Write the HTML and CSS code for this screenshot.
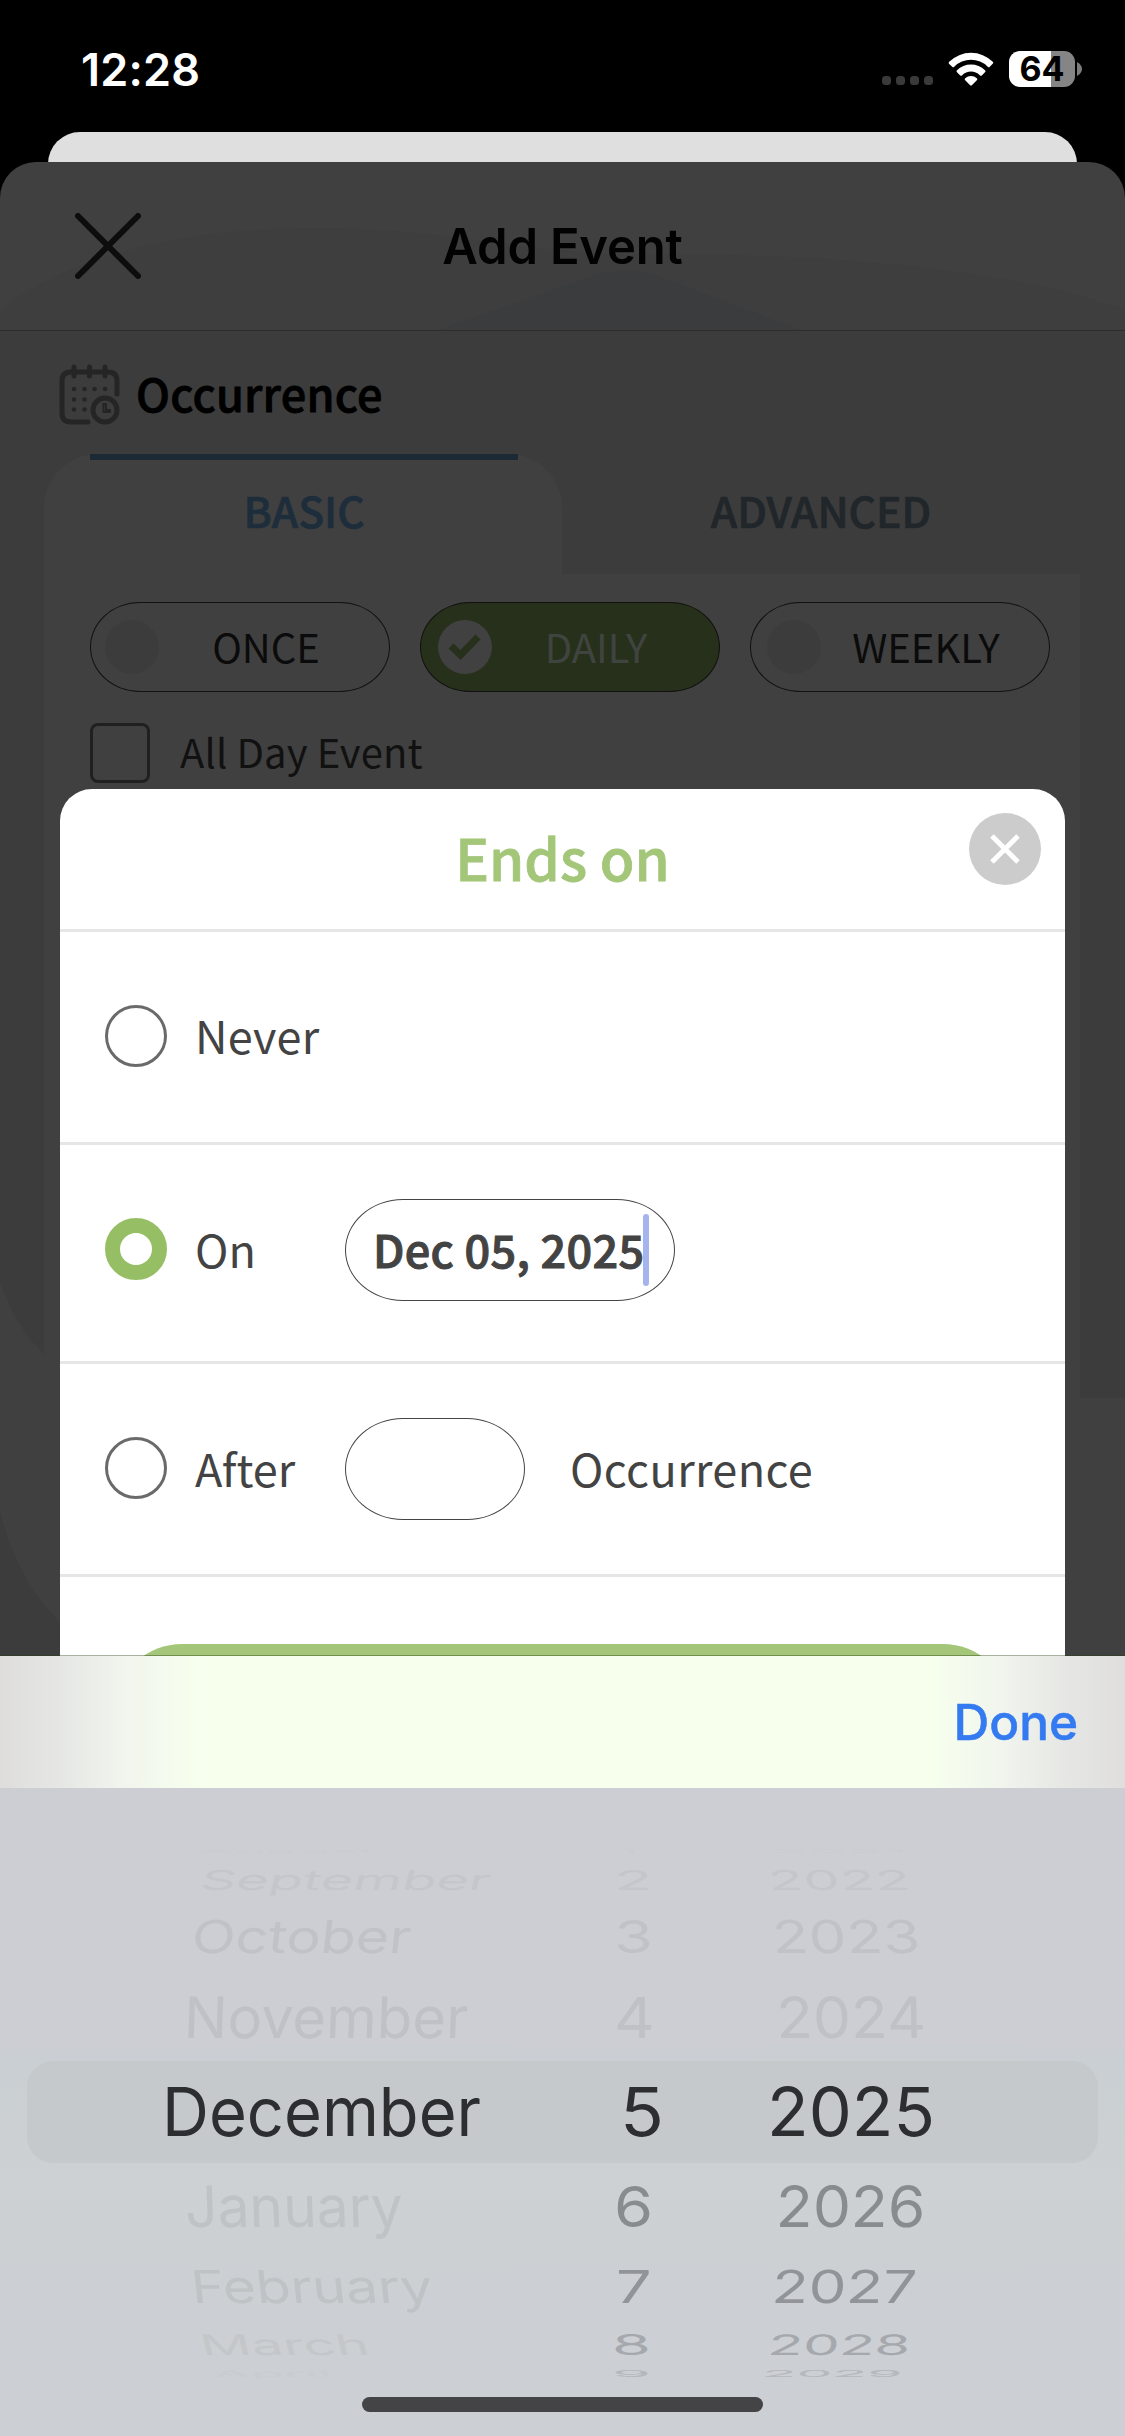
FILE: index.html
```
<!DOCTYPE html>
<html lang="en">
<head>
<meta charset="utf-8">
<title>Add Event</title>
<link rel="stylesheet" href="styles.css">
</head>
<body>
<div class="phone">
  <div class="status">
    <span class="time">12:28</span>
    <div class="indicators">
      <div class="dots"><i></i><i></i><i></i><i></i></div>
      <svg class="wifi" width="46" height="34" viewBox="0 0 46 34">
        <path d="M1.2 9.8a31 31 0 0 1 43.6 0q1 1-.1 2L41.800 14.700q-1 1-2 0a24 24 0 0 0-33.600 0q-1 1-2 0L1.200 11.900q-1-1 0-2.100zM9 18.200a20 20 0 0 1 28 0q1 1 0 2l-3 3q-1 1-2.200 0a12.600 12.600 0 0 0-17.600 0q-1.200 1-2.200 0l-3-3q-1-1 0-2zM17.200 26.300a8.600 8.600 0 0 1 11.600 0q1 1 0 2l-4.700 4.700q-1.100 1-2.200 0l-4.700-4.700q-1-1 0-2z" fill="#fff"/>
      </svg>
      <div class="battery"><span>64</span></div>
      <svg class="nub" width="5" height="14" viewBox="0 0 5 14"><path d="M0 0Q5 3 5 7T0 14z" fill="#7c7c7c"/></svg>
    </div>
  </div>
  <div class="back-sheet"></div>
  <main class="sheet">
    <svg class="scenery" width="1125" height="1500" viewBox="0 0 1125 1500">
      <path d="M0 148C80 88 190 66 320 66S520 92 640 92S980 96 1125 148V1500H0z" fill="#3e3e3e"/>
      <path d="M0 169H1125V1500H0z" fill="#3c3c3c"/>
      <path d="M438 168L590 115Q625 102 660 115L800 168z" fill="#3a3c3e"/>
      <path d="M0 1120Q20 1178 60 1205V1460Q18 1420 0 1350z" fill="#404040"/>
      <path d="M1060 1236H1125V1500H1060z" fill="#404040"/>
    </svg>
    <header class="bar">
      <svg class="close" width="66" height="66" viewBox="0 0 66 66"><path d="M3 3L63 63M63 3L3 63" stroke="#0d0d0d" stroke-width="6" stroke-linecap="round"/></svg>
      <h1>Add Event</h1>
    </header>
    <div class="section-head">
      <svg width="62" height="62" viewBox="0 0 62 62" fill="none" stroke="#252525" stroke-width="5" stroke-linecap="round">
        <path d="M29 58H12Q3 58 3 49V17Q3 8 12 8H49Q58 8 58 17V30M15 3V12M30.500 3V12M46 3V12"/>
        <circle cx="46" cy="46" r="12"/>
        <path d="M44.500 40H47V46H51V48H44.500z" stroke-width="2"/>
        <path d="M15 25h.1M25.500 25h.1M35.500 25h.1M46 25h.1M15 35.500h.1M25.500 35.500h.1M15 45.500h.1M25.500 45.500h.1" stroke-width="4.600"/>
      </svg>
      <h2>Occurrence</h2>
    </div>
    <div class="tabs">
      <div class="tab active">BASIC</div>
      <div class="tab">ADVANCED</div>
    </div>
    <div class="panel">
      <div class="pills">
        <div class="pill"><i></i><span>ONCE</span></div>
        <div class="pill on"><i><svg width="34" height="28" viewBox="0 0 34 28"><path d="M3 13L12.500 22L30 4" fill="none" stroke="#27301a" stroke-width="7"/></svg></i><span>DAILY</span></div>
        <div class="pill"><i></i><span>WEEKLY</span></div>
      </div>
      <div class="check"><i></i><span>All Day Event</span></div>
    </div>
  </main>

  <section class="modal">
    <div class="modal-head">
      <h3>Ends on</h3>
      <div class="dismiss"><svg width="30" height="30" viewBox="0 0 30 30"><path d="M2 2L28 28M28 2L2 28" stroke="#fff" stroke-width="5"/></svg></div>
    </div>
    <div class="option never"><i class="radio"></i><span class="label">Never</span></div>
    <div class="option on-date"><i class="radio checked"></i><span class="label">On</span><div class="field date"><b>Dec 05, 2025</b><i class="caret"></i></div></div>
    <div class="option after"><i class="radio"></i><span class="label">After</span><div class="field count"></div><span class="unit">Occurrence</span></div>
    <div class="save"></div>
  </section>

  <div class="keyboard">
    <div class="toolbar"><span>Done</span></div>
    <div class="picker">
      <div class="wheels">
        <ul class="wheel month"><li><span>August</span></li><li><span>September</span></li><li><span>October</span></li><li><span>November</span></li><li><span>December</span></li><li><span>January</span></li><li><span>February</span></li><li><span>March</span></li><li><span>April</span></li></ul>
        <ul class="wheel day"><li><span>1</span></li><li><span>2</span></li><li><span>3</span></li><li><span>4</span></li><li><span>5</span></li><li><span>6</span></li><li><span>7</span></li><li><span>8</span></li><li><span>9</span></li></ul>
        <ul class="wheel year"><li><span>2021</span></li><li><span>2022</span></li><li><span>2023</span></li><li><span>2024</span></li><li><span>2025</span></li><li><span>2026</span></li><li><span>2027</span></li><li><span>2028</span></li><li><span>2029</span></li></ul>
      </div>
      <div class="home"></div>
    </div>
  </div>
</div>
</body>
</html>
```
FILE: styles.css
```
* { box-sizing: border-box; margin: 0; padding: 0; }
body { background: #000; font-family: "Noto Sans CJK JP", sans-serif; }
i { font-style: normal; display: block; flex: none; }
svg { display: block; flex: none; }
.phone { position: relative; width: 1125px; height: 2436px; overflow: hidden; background: #000; }

/* status bar */
.status { height: 132px; display: flex; justify-content: space-between; padding: 6px 43px 0 81px; align-items: center; font-family: Inter, sans-serif; color: #fff; }
.time { font-size: 45px; font-weight: 600; line-height: 54px; letter-spacing: .2px; margin-top: 1px; }
.indicators { display: flex; align-items: center; }
.dots { display: flex; gap: 5px; margin: 23px 15px 0 0; }
.dots i { width: 9px; height: 9px; border-radius: 3.500px; background: #3a3a3a; }
.wifi { margin-right: 15px; }
.battery { width: 66px; height: 36px; border-radius: 11px; background: linear-gradient(90deg, #fff 42px, #858585 42px); color: #000; font-size: 34px; font-weight: 700; line-height: 36px; text-align: center; margin-right: 2px; }

/* stacked sheets */
.back-sheet { height: 60px; margin: 0 48px -30px; border-radius: 32px 32px 0 0; background: #dfdfdf; }
.sheet { position: relative; height: 2274px; border-radius: 36px 36px 0 0; background: #404040; overflow: hidden; }
.scenery { position: absolute; left: 0; top: 0; }
.bar, .section-head, .tabs, .panel { position: relative; }
.bar { height: 169px; display: grid; grid-template-columns: 66px 1fr 66px; align-items: center; padding: 0 75px; border-bottom: 1.500px solid #2d2d2d; }
.bar h1 { font: 600 49px/60px Inter, sans-serif; letter-spacing: -.2px; text-align: center; color: #020202; margin-top: 2px; }
.section-head { height: 123px; display: flex; align-items: center; gap: 15px; padding: 5px 60px 0 59px; }
.section-head h2 { font-size: 45px; font-weight: 500; line-height: 60px; letter-spacing: .2px; color: #000; margin-bottom: 4px; -webkit-text-stroke: .8px #000; }
.tabs { display: grid; grid-template-columns: 518px 518px; height: 120px; margin-left: 44px; }
.tab { position: relative; text-align: center; font-size: 42.500px; font-weight: 500; line-height: 111px; color: #20262a; -webkit-text-stroke: .7px currentColor; }
.tab.active { color: #1e2d3b; background: #404040; border-radius: 54px 54px 0 0; padding-left: 2px; }
.tab.active::before { content: ""; position: absolute; left: 46px; right: 44px; top: 0; height: 6px; background: #1b2a35; }
.panel { width: 1036px; height: 824px; margin-left: 44px; padding: 28px 0 0 46px; background: #404040; }
.pills { display: flex; gap: 30px; }
.pill { width: 300px; height: 90px; display: flex; align-items: center; padding: 0 18px 0 16px; border: 1px solid #111; border-radius: 50px / 45px; font-size: 40px; color: #0b0b0b; }
.pill i { width: 54px; height: 54px; border-radius: 50%; background: #3c3c3c; display: flex; align-items: center; justify-content: center; }
.pill:first-child i { margin: 0 2px 0 -2px; }
.pill span { flex: 1; text-align: center; line-height: 60px; margin-bottom: 3px; }
.pill.on { background: #27301a; color: #404440; }
.pill.on i { background: #414141; margin: 0 -1px 0 1px; }
.check { display: flex; align-items: center; gap: 30px; margin-top: 29px; font-size: 40px; color: #111; }
.check i { width: 60px; height: 60px; border: 3px solid #202020; border-radius: 8px; }
.check span { line-height: 60px; margin-bottom: 3px; letter-spacing: .1px; }

/* ends-on dialog */
.modal { position: absolute; left: 60px; top: 789px; width: 1005px; height: 1000px; border-radius: 32px 32px 0 0; background: #fff; color: #434343; font-size: 45px; overflow: hidden; }
.modal-head { height: 143px; border-bottom: 3px solid #e6e6e6; display: grid; grid-template-columns: 96px 1fr 96px; }
.modal-head h3 { grid-column: 2; text-align: center; font-size: 56.500px; font-weight: 500; line-height: 135px; color: #a3c679; -webkit-text-stroke: .8px #a3c679; }
.dismiss { width: 72px; height: 72px; margin-top: 24px; border-radius: 50%; background: #ccc; display: flex; align-items: center; justify-content: center; }
.option { display: flex; align-items: center; height: 213px; padding: 0 0 2px 45px; border-bottom: 3px solid #e6e6e6; line-height: 60px; }
.option.on-date { height: 219px; padding-bottom: 6px; }
.option.after { padding-bottom: 0; }
.radio { width: 62px; height: 62px; border: 3px solid #6a6a6a; border-radius: 50%; margin-right: 28px; }
.on-date .radio, .after .radio { margin-top: -2px; }
.radio.checked { border: 15px solid #96bf65; }
.label { width: 150px; margin-top: -3px; }
.never .label { margin-top: -2px; letter-spacing: .2px; }
.field { height: 102px; border: 1.500px solid #444; border-radius: 58px / 51px; display: flex; align-items: center; }
.field.date { width: 330px; padding-left: 27px; }
.field.count { width: 180px; margin-right: 45px; }
.field b { font-weight: 500; letter-spacing: .3px; -webkit-text-stroke: 1px #434343; margin-top: -2px; white-space: nowrap; }
.caret { width: 6px; height: 72px; border-radius: 3px; background: #a5b4ec; margin-left: -1px; }
.unit { margin-top: -3px; letter-spacing: .4px; }
.save { height: 120px; margin: 67px 58px 0; border-radius: 64px / 60px; background: #a3c679; }

/* date keyboard */
.keyboard { position: absolute; left: 0; right: 0; bottom: 0; height: 781px; display: flex; flex-direction: column; }
.toolbar { height: 133px; border-top: 1px solid rgba(40, 60, 20, .4); background: linear-gradient(90deg, #dedddc 0, #e6e7e4 60px, #f1f5ee 125px, #f7ffed 200px, #f7ffed 930px, #f1f5ee 1000px, #e6e7e4 1065px, #dfdedd 1125px); background-clip: padding-box; display: flex; justify-content: flex-end; align-items: center; padding-right: 47px; font: 500 49.500px/60px Inter, sans-serif; color: #347af0; -webkit-text-stroke: .5px #347af0; }
.picker { flex: 1; display: flex; flex-direction: column; align-items: center; background: linear-gradient(#cdced3 0, #cdced3 250px, #cacfd3 270px, #cdd1d3 400px, #cccfd3 500px, #cccfd3 100%); }
.wheels { width: 1071px; height: 609px; display: grid; grid-template-columns: 452px 153px 1fr; padding: 59px 0 0 135px; position: relative; }
.wheels::before { content: ""; position: absolute; left: 0; right: 0; top: 273px; height: 102px; border-radius: 26px; background: #c5c9cb; }
.wheel { position: relative; list-style: none; font: 400 67px/80px Inter, sans-serif; color: #bfc1c6; }
.wheel li { display: flex; align-items: center; white-space: nowrap; }
.wheel span { transform-origin: left center; transform: translateX(var(--x)) scale(var(--sx), var(--sy)) skewX(calc(var(--lean) * var(--dir))); }
.month { --dir: 1; }
.day { --dir: 0; }
.year { --dir: -.5; }
.wheel li:nth-child(1) { height: 8px; margin-bottom: -4px; --sy: .08; --sx: .8; --lean: -4deg; --x: 35px; color: #cbccd1; }
.wheel li:nth-child(2) { height: 57px; --sy: .41; --sx: .833; --lean: -7deg; --x: 39px; color: #c5c6cb; }
.wheel li:nth-child(3) { height: 58px; --sy: .68; --sx: .855; --lean: -5deg; --x: 30px; color: #c1c2c7; }
.wheel li:nth-child(4) { height: 104px; --sy: .85; --sx: .864; --lean: -2deg; --x: 22px; }
.wheel li:nth-child(5) { height: 84px; --sy: 1; --sx: .9705; --lean: 0deg; --x: 0px; color: #2c2e30; }
.wheel li:nth-child(6) { height: 106px; --sy: .85; --sx: .849; --lean: 2deg; --x: 23px; color: #bfc3c5; }
.wheel li:nth-child(7) { height: 54px; --sy: .68; --sx: .851; --lean: 5deg; --x: 29px; color: #bfc3c5; }
.wheel li:nth-child(8) { height: 62px; --sy: .42; --sx: .843; --lean: 7deg; --x: 38px; color: #c4c7ca; }
.wheel li:nth-child(9) { height: 20px; margin-top: -12px; --sy: .14; --sx: .82; --lean: 5deg; --x: 50px; color: #c9ccd0; }
.day li { --x: 0px !important; --sx: .94 !important; }
.day li:nth-child(7) { --x: 2px !important; }
.day li:nth-child(8), .day li:nth-child(9) { --x: -2px !important; }
.day li:nth-child(5) { --x: 6px !important; --sx: 1.080 !important; }
.year li { --sx: .895 !important; --x: 5px !important; }
.year li:nth-child(2), .year li:nth-child(8) { --sx: .862 !important; --x: 1px !important; }
.year li:nth-child(4), .year li:nth-child(6) { --sx: .902 !important; --x: 9px !important; }
.year li:nth-child(5) { --sx: 1.020 !important; --x: 0px !important; }
.year li:nth-child(9) { --sx: .847 !important; --x: -5px !important; }
.day li:nth-child(6), .year li:nth-child(6) { color: #898c8f; }
.day li:nth-child(7), .year li:nth-child(7) { color: #919498; }
.day li:nth-child(8), .year li:nth-child(8) { color: #a5a8ac; }
.day li:nth-child(9), .year li:nth-child(9) { color: #b5b8bc; }
.home { width: 401px; height: 15px; border-radius: 8px; background: #444446; }
```
